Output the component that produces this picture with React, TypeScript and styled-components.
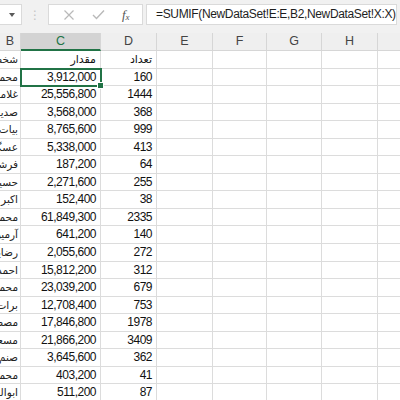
import React from "react";
import styled, { createGlobalStyle } from "styled-components";

const GlobalStyle = createGlobalStyle`
  html, body { margin: 0; padding: 0; background: #fff; }
  body { font-family: "Liberation Sans", "DejaVu Sans", sans-serif; }
`;

const COLS = [
  { key: "B", width: 21 },
  { key: "C", width: 80 },
  { key: "D", width: 56 },
  { key: "E", width: 56 },
  { key: "F", width: 54 },
  { key: "G", width: 55 },
  { key: "H", width: 56 },
  { key: "I", width: 60 },
];

const ROWS: [string, string, string][] = [
  ["شخص", "مقدار", "تعداد"],
  ["محمد رضایی", "3,912,000", "160"],
  ["غلامرضا", "25,556,800", "1444"],
  ["صدیقه", "3,568,000", "368"],
  ["بیات", "8,765,600", "999"],
  ["عسگری", "5,338,000", "413"],
  ["فرشته", "187,200", "64"],
  ["حسین", "2,271,600", "255"],
  ["اکبر احمدی", "152,400", "38"],
  ["محمد", "61,849,300", "2335"],
  ["آرمین", "641,200", "140"],
  ["رضایی", "2,055,600", "272"],
  ["احمد", "15,812,200", "312"],
  ["محمد", "23,039,200", "679"],
  ["برات", "12,708,400", "753"],
  ["مصطفی", "17,846,800", "1978"],
  ["مسعود", "21,866,200", "3409"],
  ["صنم", "3,645,600", "362"],
  ["محمد", "403,200", "41"],
  ["ابوالفضل", "511,200", "87"],
  ["", "", ""],
];

export default function App() {
  return (
    <Root>
      <GlobalStyle />
      <Toolbar>
        <NameBox>
          <Caret />
        </NameBox>
        <Grip>⋮</Grip>
        <IconBox>
          <svg width="12" height="12" viewBox="0 0 12 12">
            <path d="M1.5 1.5 L10.5 10.5 M10.5 1.5 L1.5 10.5" stroke="#b9b9b9" strokeWidth="1.2" fill="none" />
          </svg>
          <svg width="13" height="11" viewBox="0 0 13 11">
            <path d="M1 6 L4.5 9.5 L12 1.5" stroke="#b9b9b9" strokeWidth="1.4" fill="none" />
          </svg>
          <Fx>
            f<sub>x</sub>
          </Fx>
        </IconBox>
        <FormulaBox>=SUMIF(NewDataSet!E:E,B2,NewDataSet!X:X)</FormulaBox>
      </Toolbar>
      <Sheet>
        <HeaderRow>
          {COLS.map((c) => (
            <ColHead key={c.key} $w={c.width} $active={c.key === "C"}>
              {c.key === "I" ? "" : c.key}
            </ColHead>
          ))}
        </HeaderRow>
        {ROWS.map((r, i) => (
          <Row key={i}>
            <NameCell $w={COLS[0].width}>
              <span>{r[0]}</span>
            </NameCell>
            <Cell $w={COLS[1].width} $selected={i === 1} $rtl={i === 0}>
              {r[1]}
              {i === 1 && <Handle />}
            </Cell>
            <Cell $w={COLS[2].width} $rtl={i === 0}>{r[2]}</Cell>
            {COLS.slice(3).map((c) => (
              <Cell key={c.key} $w={c.width} />
            ))}
          </Row>
        ))}
      </Sheet>
    </Root>
  );
}

const Root = styled.div`
  width: 400px;
  height: 400px;
  overflow: hidden;
  background: #fff;
`;

const Toolbar = styled.div`
  height: 33px;
  background: #f1f1f1;
  display: flex;
  align-items: flex-start;
  padding-top: 4px;
  box-sizing: border-box;
`;

const NameBox = styled.div`
  width: 22px;
  height: 21px;
  background: #fff;
  border: 1px solid #dadada;
  border-left: none;
  box-sizing: border-box;
  display: flex;
  align-items: center;
  justify-content: flex-end;
  padding-right: 6px;
`;

const Caret = styled.div`
  width: 0;
  height: 0;
  border-left: 3.5px solid transparent;
  border-right: 3.5px solid transparent;
  border-top: 4px solid #5a5a5a;
`;

const Grip = styled.div`
  width: 26px;
  height: 21px;
  display: flex;
  align-items: center;
  justify-content: center;
  color: #c4c4c4;
  font-size: 12px;
`;

const IconBox = styled.div`
  width: 95px;
  height: 21px;
  background: #fff;
  border: 1px solid #dadada;
  box-sizing: border-box;
  display: flex;
  align-items: center;
  justify-content: space-around;
  padding: 0 4px 0 6px;
`;

const Fx = styled.span`
  font-family: "Liberation Serif", serif;
  font-style: italic;
  font-size: 13px;
  color: #555;
  sub {
    font-size: 9px;
    vertical-align: -1px;
  }
`;

const FormulaBox = styled.div`
  margin-left: 3px;
  width: 251px;
  height: 21px;
  background: #fff;
  border: 1px solid #dadada;
  box-sizing: border-box;
  font-size: 12px;
  letter-spacing: -0.35px;
  color: #1e1e1e;
  line-height: 19px;
  padding-left: 9px;
  white-space: nowrap;
  overflow: hidden;
`;

const Sheet = styled.div`
  display: flex;
  flex-direction: column;
`;

const HeaderRow = styled.div`
  display: flex;
  height: 18px;
  background: #efefef;
`;

const ColHead = styled.div<{ $w: number; $active?: boolean }>`
  flex: 0 0 ${(p) => p.$w}px;
  box-sizing: border-box;
  border-right: 1px solid #d6d6d6;
  border-bottom: ${(p) => (p.$active ? "2px solid #217346" : "1px solid #d6d6d6")};
  background: ${(p) => (p.$active ? "#d3d3d3" : "#efefef")};
  font-size: 12.5px;
  color: ${(p) => (p.$active ? "#217346" : "#444")};
  text-align: center;
  line-height: 17px;
`;

const Row = styled.div`
  display: flex;
  height: 17.56px;
`;

const Cell = styled.div<{ $w: number; $selected?: boolean; $rtl?: boolean }>`
  position: relative;
  flex: 0 0 ${(p) => p.$w}px;
  box-sizing: border-box;
  border-right: 1px solid #dcdcdc;
  border-bottom: 1px solid #dcdcdc;
  font-family: ${(p) => (p.$rtl ? '"DejaVu Sans", sans-serif' : '"Liberation Sans", sans-serif')};
  font-size: ${(p) => (p.$rtl ? "11px" : "12px")};
  letter-spacing: ${(p) => (p.$rtl ? "0" : "-0.5px")};
  color: #111;
  text-align: right;
  padding-right: 4px;
  line-height: 17px;
  white-space: nowrap;
  ${(p) =>
    p.$selected &&
    `
    outline: 2px solid #217346;
    outline-offset: -1px;
    z-index: 1;
  `}
`;

const Handle = styled.div`
  position: absolute;
  right: -4px;
  bottom: -4px;
  width: 5px;
  height: 5px;
  background: #217346;
  border: 1px solid #fff;
`;

const NameCell = styled.div<{ $w: number }>`
  flex: 0 0 ${(p) => p.$w}px;
  box-sizing: border-box;
  border-right: 1px solid #dcdcdc;
  border-bottom: 1px solid #dcdcdc;
  overflow: hidden;
  display: flex;
  justify-content: flex-end;
  span {
    direction: rtl;
    white-space: nowrap;
    font-family: "DejaVu Sans", sans-serif;
    font-size: 10.5px;
    color: #222;
    line-height: 17px;
    padding-right: 2px;
  }
`;
